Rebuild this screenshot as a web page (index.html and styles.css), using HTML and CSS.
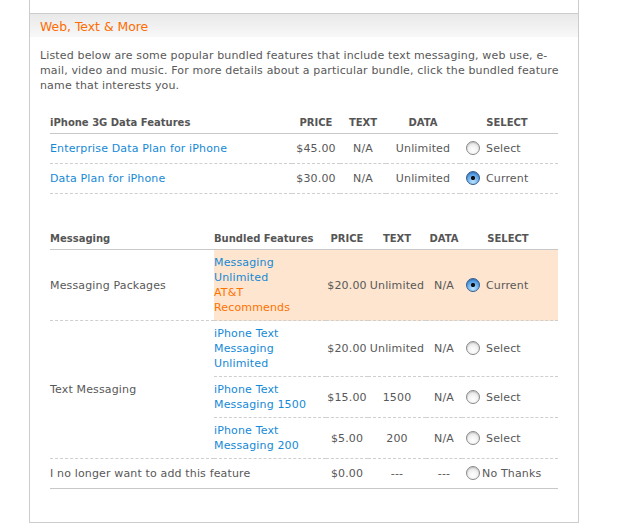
FILE: index.html
```html
<!DOCTYPE html>
<html lang="en">
<head>
<meta charset="utf-8">
<title>Web, Text &amp; More</title>
<link rel="stylesheet" href="styles.css">
</head>
<body>
<div class="panel">
  <div class="panel-top"></div>
  <div class="section">
    <h2 class="section-title">Web, Text &amp; More</h2>
    <p class="intro">Listed below are some popular bundled features that include text messaging, web use, e-mail, video and music. For more details about a particular bundle, click the bundled feature name that interests you.</p>

    <table class="features t-data">
      <colgroup>
        <col class="c-name1"><col class="c-price1"><col class="c-text1"><col class="c-data1"><col class="c-select1">
      </colgroup>
      <thead>
        <tr>
          <th class="left">iPhone 3G Data Features</th>
          <th>PRICE</th>
          <th>TEXT</th>
          <th>DATA</th>
          <th class="sel-h">SELECT</th>
        </tr>
      </thead>
      <tbody>
        <tr>
          <td class="left"><a href="#">Enterprise Data Plan for iPhone</a></td>
          <td class="num">$45.00</td>
          <td class="num">N/A</td>
          <td class="num">Unlimited</td>
          <td class="sel"><span class="radio"></span>Select</td>
        </tr>
        <tr>
          <td class="left"><a href="#">Data Plan for iPhone</a></td>
          <td class="num">$30.00</td>
          <td class="num">N/A</td>
          <td class="num">Unlimited</td>
          <td class="sel"><span class="radio on"></span>Current</td>
        </tr>
      </tbody>
    </table>

    <table class="features t-msg">
      <colgroup>
        <col class="c-name2"><col class="c-bundle"><col class="c-price2"><col class="c-text2"><col class="c-data2"><col class="c-select2">
      </colgroup>
      <thead>
        <tr>
          <th class="left">Messaging</th>
          <th class="left bundle">Bundled Features</th>
          <th>PRICE</th>
          <th>TEXT</th>
          <th>DATA</th>
          <th class="sel-h">SELECT</th>
        </tr>
      </thead>
      <tbody>
        <tr class="hl">
          <td class="left full">Messaging Packages</td>
          <td class="bundle"><a href="#">Messaging Unlimited</a><span class="rec">AT&amp;T Recommends</span></td>
          <td class="num">$20.00</td>
          <td class="num">Unlimited</td>
          <td class="num">N/A</td>
          <td class="sel"><span class="radio on"></span>Current</td>
        </tr>
        <tr>
          <td class="left full" rowspan="3">Text Messaging</td>
          <td class="bundle"><a href="#">iPhone Text Messaging Unlimited</a></td>
          <td class="num">$20.00</td>
          <td class="num">Unlimited</td>
          <td class="num">N/A</td>
          <td class="sel"><span class="radio"></span>Select</td>
        </tr>
        <tr>
          <td class="bundle"><a href="#">iPhone Text Messaging 1500</a></td>
          <td class="num">$15.00</td>
          <td class="num">1500</td>
          <td class="num">N/A</td>
          <td class="sel"><span class="radio"></span>Select</td>
        </tr>
        <tr>
          <td class="bundle"><a href="#">iPhone Text Messaging 200</a></td>
          <td class="num">$5.00</td>
          <td class="num">200</td>
          <td class="num">N/A</td>
          <td class="sel"><span class="radio"></span>Select</td>
        </tr>
        <tr class="last">
          <td class="left" colspan="2">I no longer want to add this feature</td>
          <td class="num">$0.00</td>
          <td class="num">---</td>
          <td class="num">---</td>
          <td class="sel"><span class="radio tight"></span>No Thanks</td>
        </tr>
      </tbody>
    </table>
  </div>
</div>
</body>
</html>
```

FILE: styles.css
```css
html, body {
  margin: 0;
  padding: 0;
  background: #fff;
}

body {
  font-family: "DejaVu Sans", Verdana, sans-serif;
  font-size: 11px;
  line-height: 15px;
  letter-spacing: 0.15px;
  color: #585858;
}

.panel {
  margin-left: 29px;
  width: 548px;
  border: 1px solid #cccccc;
  border-top: none;
  height: 522px;
}

.panel-top {
  height: 13px;
}

.section {
  border-top: 1px solid #cccccc;
}

.section-title {
  margin: 0;
  padding: 1px 10px 0;
  height: 22px;
  line-height: 23px;
  font-size: 12.4px;
  letter-spacing: 0;
  font-weight: normal;
  color: #ff6c00;
  background: linear-gradient(#e9e9e9, #f8f8f8);
}

.intro {
  margin: 11px 0 0;
  padding: 0 10px;
}

a {
  color: #1589d6;
  text-decoration: none;
}

.features {
  margin-left: 20px;
  width: 508px;
  table-layout: fixed;
  border-collapse: collapse;
}

.t-data {
  margin-top: 19px;
}

.t-msg {
  margin-top: 34px;
}

.c-name1 { width: 242px; }
.c-price1 { width: 48px; }
.c-text1 { width: 46px; }
.c-data1 { width: 74px; }
.c-select1 { width: 98px; }

.c-name2 { width: 164px; }
.c-bundle { width: 112px; }
.c-price2 { width: 42px; }
.c-text2 { width: 58px; }
.c-data2 { width: 36px; }
.c-select2 { width: 96px; }

.features th {
  font-size: 10px;
  font-weight: bold;
  letter-spacing: 0;
  color: #555555;
  text-align: center;
  padding: 3px 0;
  line-height: 15px;
  border-bottom: 1px solid #c8c8c8;
  white-space: nowrap;
}

.features th.left {
  text-align: left;
}

.features th.sel-h {
  padding-right: 4px;
}

.features td {
  padding: 5px 0;
  height: 19px;
  vertical-align: middle;
  text-align: center;
  border-bottom: 1px dashed #cfcfcf;
  white-space: nowrap;
}

.features td.left {
  text-align: left;
}

.features td.bundle {
  text-align: left;
  white-space: normal;
  padding-right: 6px;
}

.rec {
  display: block;
  color: #ff7200;
}

.features td.sel {
  text-align: left;
  padding-left: 4px;
}

.t-data td.sel {
  padding-left: 6px;
}

.hl td {
  background: #fde5cf;
}

.hl td.full {
  background: #fff;
}

.last td {
  border-bottom: 1px solid #c8c8c8;
}

.radio {
  display: inline-block;
  box-sizing: border-box;
  width: 14px;
  height: 14px;
  margin-right: 6px;
  vertical-align: -3px;
  border-radius: 50%;
  border: 1px solid #8a8a8a;
  background: radial-gradient(circle at 50% 70%, #ffffff 0%, #f2f2f2 45%, #d2d2d2 100%);
  box-shadow: inset 0 1px 1px rgba(0,0,0,0.15);
}

.radio.tight {
  margin-right: 2px;
}

.radio.on {
  border-color: #3a5f8c;
  background:
    radial-gradient(circle at 50% 50%, #111 0, #111 1.8px, transparent 2.4px),
    radial-gradient(circle at 50% 80%, #bfe3ff 0%, #6fb3f0 45%, #2c74c8 100%);
}
```
